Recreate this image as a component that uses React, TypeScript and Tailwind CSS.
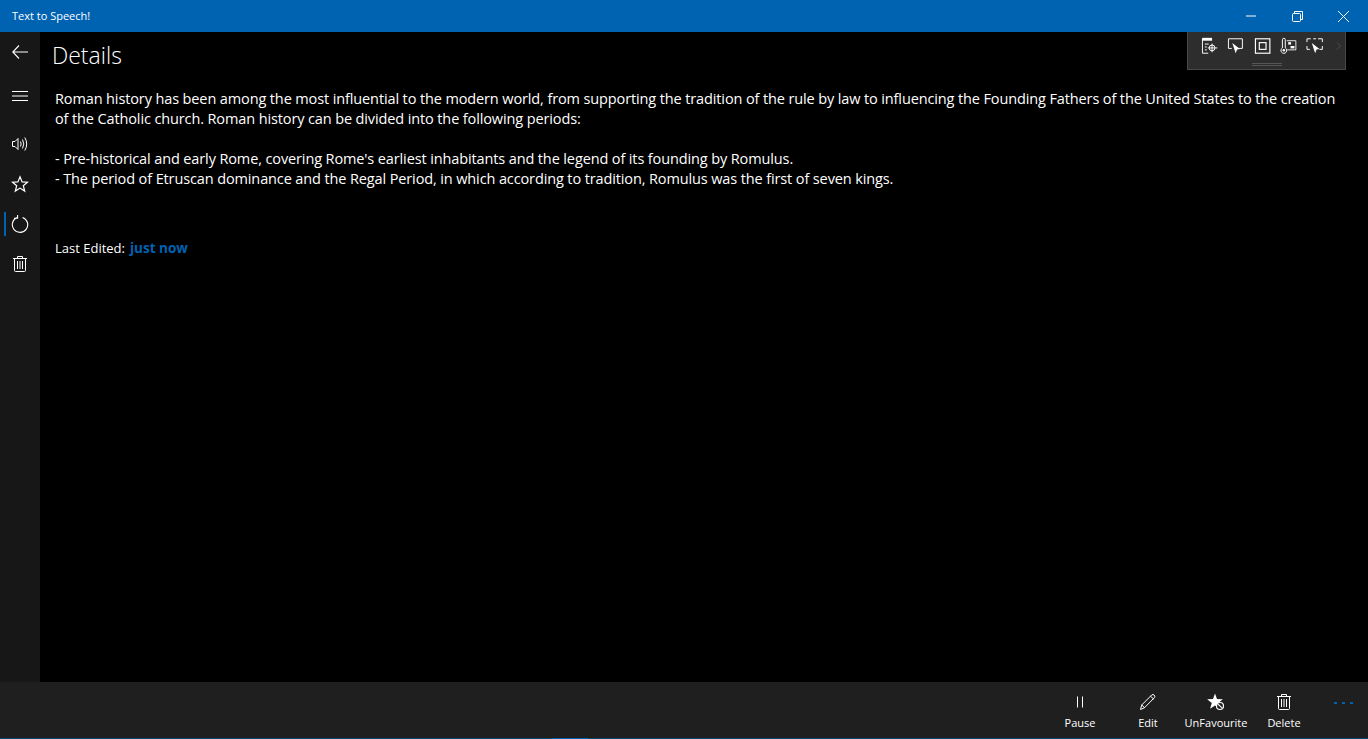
import React from 'react';
import { ChevronRight } from 'lucide-react';

const font = { fontFamily: '"Open Sans", "Noto Sans", sans-serif' };

const Trash = () => (
  <svg width="18" height="18" viewBox="0 0 18 18" fill="none" stroke="white" strokeWidth="1">
    <path d="M2 3.5h14M6.5 3.5V1.5h5v2M3.5 3.5v12a1 1 0 0 0 1 1h9a1 1 0 0 0 1-1v-12M6.5 6v8M9 6v8M11.5 6v8" />
  </svg>
);

const SideButton = ({ children, active }: { children: React.ReactNode; active?: boolean }) => (
  <div className="relative flex h-10 w-10 items-center justify-center">
    {active && <div className="absolute left-1 top-2 h-6 w-[2px] bg-[#0063b1]" />}
    {children}
  </div>
);

const CommandButton = ({ label, children }: { label: string; children: React.ReactNode }) => (
  <div className="flex w-[68px] flex-col items-center">
    <div className="flex h-[22px] items-center justify-center">{children}</div>
    <div className="mt-[2px] text-[11px] leading-4 text-white">{label}</div>
  </div>
);

const App = () => {
  return (
    <div className="relative flex h-[739px] w-[1368px] flex-col overflow-hidden bg-black text-white" style={font}>
      <div className="flex h-8 shrink-0 items-center justify-between bg-[#0063b1]">
        <div className="pl-3 text-[11px] text-white">Text to Speech!</div>
        <div className="mr-[2px] flex items-center">
          <div className="flex h-8 w-[46px] items-center justify-center">
            <svg width="10" height="2" viewBox="0 0 10 2" stroke="white"><path d="M0 1h10" /></svg>
          </div>
          <div className="flex h-8 w-[46px] items-center justify-center">
            <svg width="11" height="11" viewBox="0 0 11 11" fill="none" stroke="white" strokeWidth="1">
              <path d="M2.500 2.500V.5h8v8H8.500" />
              <rect x=".5" y="2.500" width="8" height="8" rx="1" />
            </svg>
          </div>
          <div className="flex h-8 w-[46px] items-center justify-center">
            <svg width="11" height="11" viewBox="0 0 11 11" stroke="white" strokeWidth="1"><path d="M0 0l11 11M11 0L0 11" /></svg>
          </div>
        </div>
      </div>

      <div className="flex min-h-0 flex-1">
        <div className="flex w-10 shrink-0 flex-col items-center bg-[#171717]">
          <div className="flex h-10 items-center">
            <svg width="16" height="14" viewBox="0 0 16 14" fill="none" stroke="white" strokeWidth="1.1"><path d="M7 .5L.8 7 7 13.500M1 7h15" /></svg>
          </div>
          <div className="mt-1 flex h-10 items-center">
            <svg width="16" height="10" viewBox="0 0 16 10" stroke="white" strokeWidth="1"><path d="M0 .5h16M0 5h16M0 9.500h16" /></svg>
          </div>
          <div className="mt-2 flex flex-col">
            <SideButton>
              <svg width="18" height="18" viewBox="0 0 18 18" fill="none" stroke="white" strokeWidth="1">
                <path d="M1.500 6.500h2.500l3-3v11l-3-3H1.500zM9.500 6.500q1.300 2.500 0 5M11.500 4.500q2.600 4.500 0 9M13.800 2.500q3.800 6.500 0 13" />
              </svg>
            </SideButton>
            <SideButton>
              <svg width="18" height="18" viewBox="0 0 18 18" fill="none" stroke="white" strokeWidth="1.2"><path d="M9 1.800l2.100 5.100 5.400.3-4.200 3.500 1.400 5.400L9 13.100l-4.700 3 1.400-5.400-4.200-3.500 5.400-.3z" /></svg>
            </SideButton>
            <SideButton active>
              <svg width="18" height="18" viewBox="0 0 18 18" fill="none" stroke="white" strokeWidth="1.1">
                <path d="M6 2.600a7.700 7.700 0 1 0 5.500-.2M6.600 0v3.300H3" />
              </svg>
            </SideButton>
            <SideButton><Trash /></SideButton>
          </div>
        </div>

        <div className="min-w-0 flex-1 pl-3 pr-5">
          <div className="pt-[5px] text-[23px] leading-9 font-light">Details</div>
          <div className="mt-4 pl-[3px] text-[14.5px] leading-5 tracking-[-0.12px]">
            <p>Roman history has been among the most influential to the modern world, from supporting the tradition of the rule by law to influencing the Founding Fathers of the United States to the creation of the Catholic church. Roman history can be divided into the following periods:</p>
            <p className="mt-5">- Pre-historical and early Rome, covering Rome's earliest inhabitants and the legend of its founding by Romulus.</p>
            <p>- The period of Etruscan dominance and the Regal Period, in which according to tradition, Romulus was the first of seven kings.</p>
          </div>
          <div className="mt-[49px] flex gap-[5px] pl-[3px] text-[13px] leading-5">
            <span>Last Edited:</span>
            <span className="text-[13.500px] font-bold text-[#0063b1]">just now</span>
          </div>
        </div>
      </div>

      <div className="flex h-14 shrink-0 items-start justify-end bg-[#1f1f1f] pt-[9px]">
        <CommandButton label="Pause">
          <svg width="10" height="14" viewBox="0 0 10 14" stroke="white" strokeWidth="1"><path d="M2.500 1.500v11M7.500 1.500v11" /></svg>
        </CommandButton>
        <CommandButton label="Edit">
          <svg width="18" height="18" viewBox="0 0 18 18" fill="none" stroke="white" strokeWidth="1">
            <path d="M1.500 16.500l1.200-4.500L12.800 1.900q1.200-.9 2.400.2t.3 2.500L5.400 14.800zM2.700 12l3 2.800M11.500 3.200l3.300 3" />
          </svg>
        </CommandButton>
        <CommandButton label="UnFavourite">
          <svg width="18" height="18" viewBox="0 0 18 18" fill="none" stroke="white">
            <path d="M8 .5l2 5.600 5.900.2-4.700 3.700 1.700 5.700L8 12.400l-4.900 3.300 1.700-5.700L.1 6.300 6 6.100z" fill="white" stroke="none" />
            <circle cx="13" cy="13" r="3.500" fill="#1f1f1f" strokeWidth="1.200" />
            <path d="M10.800 10.800l4.400 4.400" strokeWidth="1.200" />
          </svg>
        </CommandButton>
        <CommandButton label="Delete"><Trash /></CommandButton>
        <div className="flex w-[50px] justify-center gap-[5px] pt-[11px]">
          <div className="h-[2px] w-[3px] bg-[#0063b1]" />
          <div className="h-[2px] w-[3px] bg-[#0063b1]" />
          <div className="h-[2px] w-[3px] bg-[#0063b1]" />
        </div>
      </div>
      <div className="flex h-px shrink-0 bg-[#0b4a6f]">
        <div className="ml-[552px] w-9 bg-[#0063b1]" />
      </div>

      <div className="absolute left-[1187px] top-8 flex h-[38px] w-[159px] items-start gap-[9px] border border-t-0 border-[#484848] bg-[#2d2d2d] pl-[13px] pt-[5px]">
        <svg width="18" height="18" viewBox="0 0 18 18" fill="none" stroke="white">
          <path d="M1.500 2h10" strokeWidth="3" /><path d="M1.500 1v15.500h6M4 7h4M4 10h2M4 13h2" /><circle cx="11.500" cy="11" r="3" /><path d="M11.500 6.500v9M7 11h10" />
        </svg>
        <svg width="18" height="18" viewBox="0 0 18 18" fill="none" stroke="white"><path d="M5 11.500H1.500v-10h14.500v10H12" /><path d="M5.500 6l8 6-3 .6-1.500 4z" fill="white" stroke="none" /></svg>
        <svg width="18" height="18" viewBox="0 0 18 18" fill="none" stroke="white" strokeWidth="1.200"><rect x="1.500" y="1.500" width="15" height="15" /><rect x="5.500" y="5.500" width="7" height="7" /></svg>
        <svg width="18" height="18" viewBox="0 0 18 18" fill="none" stroke="white"><path d="M2.500 11V2.500a1.500 1.500 0 0 1 3 0V11a3 3 0 1 1-3 0z" /><circle cx="4" cy="13.500" r="1.300" fill="white" stroke="none" /><path d="M7 3.500h9.500v9.500H7.500" strokeWidth=".9" /><rect x="11" y="9" width="4" height="2.500" fill="white" stroke="none" /><rect x="8.500" y="5" width="3" height="2.500" fill="white" stroke="none" /></svg>
        <svg width="18" height="18" viewBox="0 0 18 18" fill="none" stroke="white"><path d="M1 5V1.500h4M12.500 1.500h4.500V5M1 9v3.500h3M17 9v3.500h-3M7.500 1.500h3" /><path d="M6 6l8 6-3 .6-1.500 4z" fill="white" stroke="none" /></svg>
        <ChevronRight size={14} strokeWidth={1.4} className="mt-[2px] -ml-[1px] text-[#555]" />
        <div className="absolute bottom-[3px] left-[64px] h-[3px] w-[30px] border-y border-[#555]" />
      </div>
    </div>
  );
};

export default App;
